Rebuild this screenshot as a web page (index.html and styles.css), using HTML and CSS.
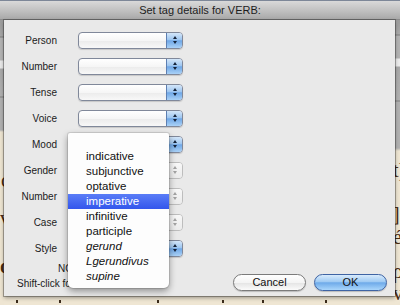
FILE: index.html
```html
<!DOCTYPE html>
<html>
<head>
<meta charset="utf-8">
<link rel="stylesheet" href="styles.css">
</head>
<body>
<div class="window">
  <div class="titlebar">Set tag details for VERB:</div>
  <div class="content">
    <div class="edge edge-left">
      <span class="g g1">c</span>
      <span class="g g2">v</span>
      <span class="g g3">o</span>
    </div>
    <div class="center">
      <div class="sheet">
        <div class="fields">
          <div class="label">Person</div><div class="popup"><span class="popup-arrow"></span></div>
          <div class="label">Number</div><div class="popup"><span class="popup-arrow"></span></div>
          <div class="label">Tense</div><div class="popup"><span class="popup-arrow"></span></div>
          <div class="label">Voice</div><div class="popup"><span class="popup-arrow"></span></div>
          <div class="label">Mood</div><div class="popup"><span class="popup-arrow"></span></div>
          <div class="label">Gender</div><div class="popup is-disabled"><span class="popup-arrow"></span></div>
          <div class="label">Number</div><div class="popup is-disabled"><span class="popup-arrow"></span></div>
          <div class="label">Case</div><div class="popup is-disabled"><span class="popup-arrow"></span></div>
          <div class="label">Style</div><div class="popup"><span class="popup-arrow"></span></div>
        </div>
        <div class="footer">
          <div class="notes">
            <div class="note note-a">NOTE:</div>
            <div class="note note-b">Shift-click for more</div>
          </div>
          <div class="buttons">
            <button class="btn">Cancel</button>
            <button class="btn btn-default">OK</button>
          </div>
        </div>
        <ul class="menu">
          <li class="menu-item">indicative</li>
          <li class="menu-item">subjunctive</li>
          <li class="menu-item">optative</li>
          <li class="menu-item is-selected">imperative</li>
          <li class="menu-item">infinitive</li>
          <li class="menu-item">participle</li>
          <li class="menu-item is-italic">gerund</li>
          <li class="menu-item is-italic">Lgerundivus</li>
          <li class="menu-item is-italic">supine</li>
        </ul>
      </div>
      <div class="ruler">
        <span class="tick t1"></span><span class="tick t2"></span><span class="tick t3"></span><span class="tick t4"></span><span class="tick t5"></span><span class="tick t6"></span>
      </div>
    </div>
    <div class="edge edge-right">
      <span class="g r1">t]</span>
      <span class="g r2">]</span>
      <span class="g r3">é</span>
      <span class="g r4">ρ</span>
      <span class="g r5">v</span>
    </div>
  </div>
</div>
</body>
</html>
```
FILE: styles.css
```css
* { box-sizing: border-box; }
html, body { margin: 0; padding: 0; }
body {
  width: 400px;
  height: 305px;
  overflow: hidden;
  background: #efe6d3;
  font-family: "Liberation Sans", Arial, sans-serif;
}
.window { width: 400px; height: 305px; display: flex; flex-direction: column; }
.titlebar {
  height: 20px;
  flex: none;
  border-top: 1px solid #7d8798;
  background: linear-gradient(#d9d9d9, #c2c2c2 50%, #a9a9a9);
  color: #1d1d1d;
  font-size: 11px;
  line-height: 19px;
  text-align: center;
  border-bottom: 1px solid #8c8c8c;
}
.content { flex: 1; display: flex; min-height: 0; }
.edge {
  display: flex;
  flex-direction: column;
  overflow: hidden;
  font-family: "Liberation Serif", "Times New Roman", serif;
  color: #4a2b12;
  font-size: 20px;
}
.edge-left {
  width: 4px;
  background: linear-gradient(#9b9b9b 0, #a6a6a6 16px, #7d7d7d 17px, #b3b3b3 18px, #b3b3b3 40px, #e9e9e9 41px, #e9e9e9 48px, #a9a9a9 49px, #b0b0b0 76px, #808080 77px, #b1b1b1 78px, #b1b1b1 110px, #eee5d2 112px);
  align-items: flex-end;
}
.edge-right {
  flex: 1;
  background: linear-gradient(#9c9c9c 0, #a9a9a9 14px, #7f7f7f 15px, #b3b3b3 16px, #b3b3b3 38px, #ececec 39px, #ececec 46px, #a9a9a9 47px, #b1b1b1 80px, #7f7f7f 81px, #b1b1b1 82px, #b1b1b1 128px, #efe6d3 131px);
}
.g { display: block; line-height: 1; }
.edge-left .g { margin-right: -6px; }
.g1 { margin-top: 150px; }
.g2 { margin-top: 18px; }
.g3 { margin-top: 28px; font-weight: bold; }
.edge-right .g { margin-left: -2px; }
.r1 { margin-top: 140px; }
.r2 { margin-top: 24px; }
.r3 { margin-top: 3px; }
.r4 { margin-top: 14px; }
.r5 { margin-top: 2px; }

.center { width: 391px; display: flex; flex-direction: column; }
.sheet {
  position: relative;
  height: 276px;
  background: #e9e9e9;
  padding-top: 7px;
  box-shadow: 0 0 0 1px rgba(0,0,0,0.28), 0 2px 4px rgba(0,0,0,0.35);
  display: flex;
  flex-direction: column;
}
.fields {
  display: grid;
  grid-template-columns: 53px 105px;
  grid-auto-rows: 26px;
  column-gap: 21px;
  align-items: center;
}
.label {
  justify-self: end;
  font-size: 10px;
  color: #1b1b1b;
}
.popup {
  height: 17px;
  width: 105px;
  border: 1px solid #80889a;
  border-radius: 4px;
  background: linear-gradient(#ffffff, #f6f6f6 50%, #ebebeb 51%, #f8f8f8);
  display: flex;
  justify-content: flex-end;
  overflow: hidden;
  box-shadow: 0 1px 1px rgba(0,0,0,0.15);
}
.popup-arrow {
  width: 16px;
  border-left: 1px solid #5d7fb2;
  background: linear-gradient(#d3e6f9, #9ec6f0 45%, #6fa7e6 52%, #a9d1f7);
  display: flex;
  flex-direction: column;
  align-items: center;
  justify-content: center;
  gap: 2px;
}
.popup-arrow::before,
.popup-arrow::after {
  content: "";
  width: 0;
  height: 0;
  border-left: 2.5px solid transparent;
  border-right: 2.5px solid transparent;
}
.popup-arrow::before { border-bottom: 3px solid #15233a; }
.popup-arrow::after { border-top: 3px solid #15233a; }
.popup.is-disabled {
  border-color: #bdbdbd;
  background: linear-gradient(#fbfbfb, #f1f1f1);
  box-shadow: none;
}
.popup.is-disabled .popup-arrow {
  border-left-color: #c5c5c5;
  background: linear-gradient(#f8f8f8, #ebebeb);
}
.popup.is-disabled .popup-arrow::before { border-bottom-color: #a3a3a3; }
.popup.is-disabled .popup-arrow::after { border-top-color: #a3a3a3; }

.footer {
  height: 30px;
  display: flex;
  justify-content: space-between;
}
.notes { font-size: 10px; color: #1b1b1b; }
.note { line-height: 15px; white-space: nowrap; }
.note-a { padding-left: 54px; }
.note-b { padding-left: 13px; }
.buttons {
  align-self: flex-end;
  display: flex;
  gap: 8px;
  margin-right: 8px;
}
.btn {
  width: 73px;
  height: 17px;
  border-radius: 9px;
  border: 1px solid #7b7b7b;
  background: linear-gradient(#ffffff, #f4f4f4 50%, #e4e4e4 52%, #fbfbfb);
  font-family: "Liberation Sans", Arial, sans-serif;
  font-size: 11px;
  color: #111;
  padding: 0;
  line-height: 15px;
  box-shadow: 0 1px 1px rgba(0,0,0,0.2);
}
.btn-default {
  border-color: #3f64a4;
  background: linear-gradient(#d8ebfc, #9fcaf3 45%, #6eaae9 52%, #aad6fb);
}
.menu {
  position: absolute;
  left: 64px;
  top: 113px;
  width: 101px;
  height: 155px;
  margin: 0;
  padding: 16px 0 0;
  list-style: none;
  background: #fdfdfd;
  border-radius: 2px 2px 5px 5px;
  box-shadow: 0 0 0 1px rgba(0,0,0,0.1), 0 3px 7px rgba(0,0,0,0.4);
}
.menu-item {
  height: 15px;
  line-height: 15px;
  padding-left: 18px;
  font-size: 11.5px;
  color: #111;
  white-space: nowrap;
}
.menu-item.is-selected {
  color: #fff;
  background: linear-gradient(#5a7df7, #3356ec);
}
.menu-item.is-italic { font-style: italic; }

.ruler { flex: 1; position: relative; }
.tick { position: absolute; bottom: 2px; width: 2px; height: 3px; background: #3a2a1a; }
.t1 { left: 12px; }
.t2 { left: 55px; }
.t3 { left: 153px; }
.t4 { left: 218px; }
.t5 { left: 258px; }
.t6 { left: 321px; }
```
